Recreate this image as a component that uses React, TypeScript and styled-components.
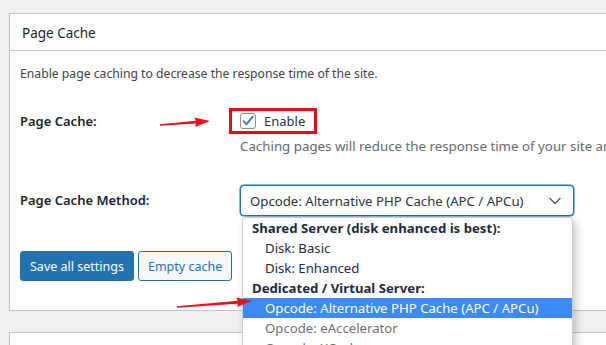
import React from "react";
import styled, { createGlobalStyle } from "styled-components";
import { ChevronDown } from "lucide-react";

const GlobalStyle = createGlobalStyle`
  html, body { margin: 0; padding: 0; background: #f0f0f1; }
  body {
    font-family: "Noto Sans", "Open Sans", Arial, sans-serif;
    font-size: 13px;
    color: #1d2327;
    overflow: hidden;
  }
  * { box-sizing: border-box; }
`;

const Page = styled.div`
  position: relative;
  width: 606px;
  height: 345px;
  overflow: hidden;
  padding: 13px 0 0 9px;
`;

const Panel = styled.section`
  width: 640px;
  background: #fff;
  border: 1px solid #c3c4c7;
  & + & { margin-top: 21px; }
`;

const PanelHeader = styled.h2`
  margin: 0;
  height: 37px;
  padding: 2px 12px 0 12px;
  display: flex;
  align-items: center;
  border-bottom: 1px solid #c3c4c7;
  font-size: 13.5px;
  font-weight: 400;
  color: #1d2327;
`;

const PanelBody = styled.div`
  padding: 14px 10px 29px 10px;
`;

const Description = styled.p`
  margin: 0 0 25px 0;
  line-height: 18px;
  font-size: 12.2px;
  color: #3c434a;
`;

const FormGrid = styled.div`
  display: grid;
  grid-template-columns: 220px 1fr;
  row-gap: 30px;
`;

const Label = styled.div<{ $top?: number; $lh?: number }>`
  font-weight: 600;
  color: #1d2327;
  padding-top: ${(p) => p.$top ?? 0}px;
  line-height: ${(p) => p.$lh ?? 18}px;
`;

const Field = styled.div`
  display: flex;
  flex-direction: column;
  align-items: flex-start;
`;

const HighlightBox = styled.label`
  display: flex;
  align-items: center;
  gap: 8px;
  height: 26px;
  margin-left: -11px;
  padding: 0 9px 0 8px;
  border: 3px solid #ea0a16;
  color: #2c3338;
`;

const CheckBox = styled.span`
  width: 16px;
  height: 16px;
  border: 1px solid #8c8f94;
  border-radius: 3px;
  background: #fff;
  display: flex;
  align-items: center;
  justify-content: center;
`;

const Help = styled.p`
  margin: 3px 0 0 0;
  line-height: 18px;
  font-size: 13.3px;
  color: #646970;
  white-space: nowrap;
`;

const SelectWrap = styled.div`
  position: relative;
  z-index: 5;
`;

const Select = styled.div`
  width: 334px;
  height: 31px;
  border: 1.5px solid #2271b1;
  border-radius: 4px;
  box-shadow: 0 0 0 0.5px #2271b1;
  display: flex;
  align-items: center;
  justify-content: space-between;
  padding: 0 8px 0 9px;
  font-size: 13.2px;
  color: #2c3338;
  background: #fff;
`;

const DropList = styled.ul`
  position: absolute;
  left: 2px;
  top: 32px;
  width: 331px;
  margin: 0;
  padding: 0;
  list-style: none;
  background: #fff;
  border: 1px solid #cfcfcf;
  border-radius: 4px;
  box-shadow: 3px 4px 10px rgba(0, 0, 0, 0.22);
  overflow: hidden;
`;

const Option = styled.li<{ $group?: boolean; $selected?: boolean; $muted?: boolean }>`
  height: 20px;
  line-height: 20px;
  white-space: nowrap;
  font-size: 13.2px;
  padding-left: ${(p) => (p.$group ? 9 : 22)}px;
  font-weight: ${(p) => (p.$group ? 700 : 400)};
  background: ${(p) => (p.$selected ? "#3b8af5" : "transparent")};
  color: ${(p) =>
    p.$selected ? "#fff" : p.$muted ? "#6f6f6f" : p.$group ? "#1d2b40" : "#1d2b3a"};
`;

const Buttons = styled.div`
  display: flex;
  gap: 4px;
  margin-top: 35px;
`;

const Button = styled.button<{ $primary?: boolean }>`
  height: 30px;
  padding: 0 9px;
  border-radius: 3px;
  font-family: inherit;
  font-size: 12.5px;
  border: 1px solid #2271b1;
  background: ${(p) => (p.$primary ? "#2271b1" : "#f6f7f7")};
  color: ${(p) => (p.$primary ? "#fff" : "#2271b1")};
`;

const SecondPanel = styled(Panel)`
  height: 40px;
`;

const Arrow = styled.svg<{ $x: number; $y: number }>`
  position: absolute;
  left: ${(p) => p.$x}px;
  top: ${(p) => p.$y}px;
  z-index: 10;
  overflow: visible;
`;

const RedArrow: React.FC<{ x: number; y: number; len: number; rise: number }> = ({
  x,
  y,
  len,
  rise,
}) => {
  const angle = (Math.atan2(-rise, len) * 180) / Math.PI;
  return (
    <Arrow $x={x} $y={y} width={len} height={12} viewBox={`0 0 ${len} 12`}>
      <g transform={`rotate(${angle} 0 6)`}>
        <polygon
          points={`0,5.3 ${len - 14},4.5 ${len - 15},1.2 ${len},6 ${len - 15},10.8 ${len - 14},7.5 0,6.7`}
          fill="#e8101a"
        />
      </g>
    </Arrow>
  );
};

export default function App() {
  return (
    <>
      <GlobalStyle />
      <Page>
        <Panel>
          <PanelHeader>Page Cache</PanelHeader>
          <PanelBody>
            <Description>Enable page caching to decrease the response time of the site.</Description>
            <FormGrid>
              <Label $top={4}>Page Cache:</Label>
              <Field>
                <HighlightBox>
                  <CheckBox>
                    <svg width="12" height="12" viewBox="0 0 12 12">
                      <path
                        d="M1.6 6.2 L4.6 9.2 L10.6 1.8"
                        fill="none"
                        stroke="#3582c4"
                        strokeWidth="2"
                        strokeLinecap="round"
                        strokeLinejoin="round"
                      />
                    </svg>
                  </CheckBox>
                  Enable
                </HighlightBox>
                <Help>Caching pages will reduce the response time of your site and increase the scale of your web server.</Help>
              </Field>
              <Label $lh={31}>Page Cache Method:</Label>
              <Field>
                <SelectWrap>
                  <Select>
                    <span>Opcode: Alternative PHP Cache (APC / APCu)</span>
                    <ChevronDown size={20} strokeWidth={1.6} color="#50575e" />
                  </Select>
                  <DropList>
                    <Option $group>Shared Server (disk enhanced is best):</Option>
                    <Option>Disk: Basic</Option>
                    <Option>Disk: Enhanced</Option>
                    <Option $group>Dedicated / Virtual Server:</Option>
                    <Option $selected>Opcode: Alternative PHP Cache (APC / APCu)</Option>
                    <Option $muted>Opcode: eAccelerator</Option>
                    <Option $muted>Opcode: XCache</Option>
                  </DropList>
                </SelectWrap>
              </Field>
            </FormGrid>
            <Buttons>
              <Button $primary>Save all settings</Button>
              <Button>Empty cache</Button>
            </Buttons>
          </PanelBody>
        </Panel>
        <SecondPanel />
        <RedArrow x={160} y={119} len={50} rise={4} />
        <RedArrow x={177} y={301} len={75} rise={6} />
      </Page>
    </>
  );
}
